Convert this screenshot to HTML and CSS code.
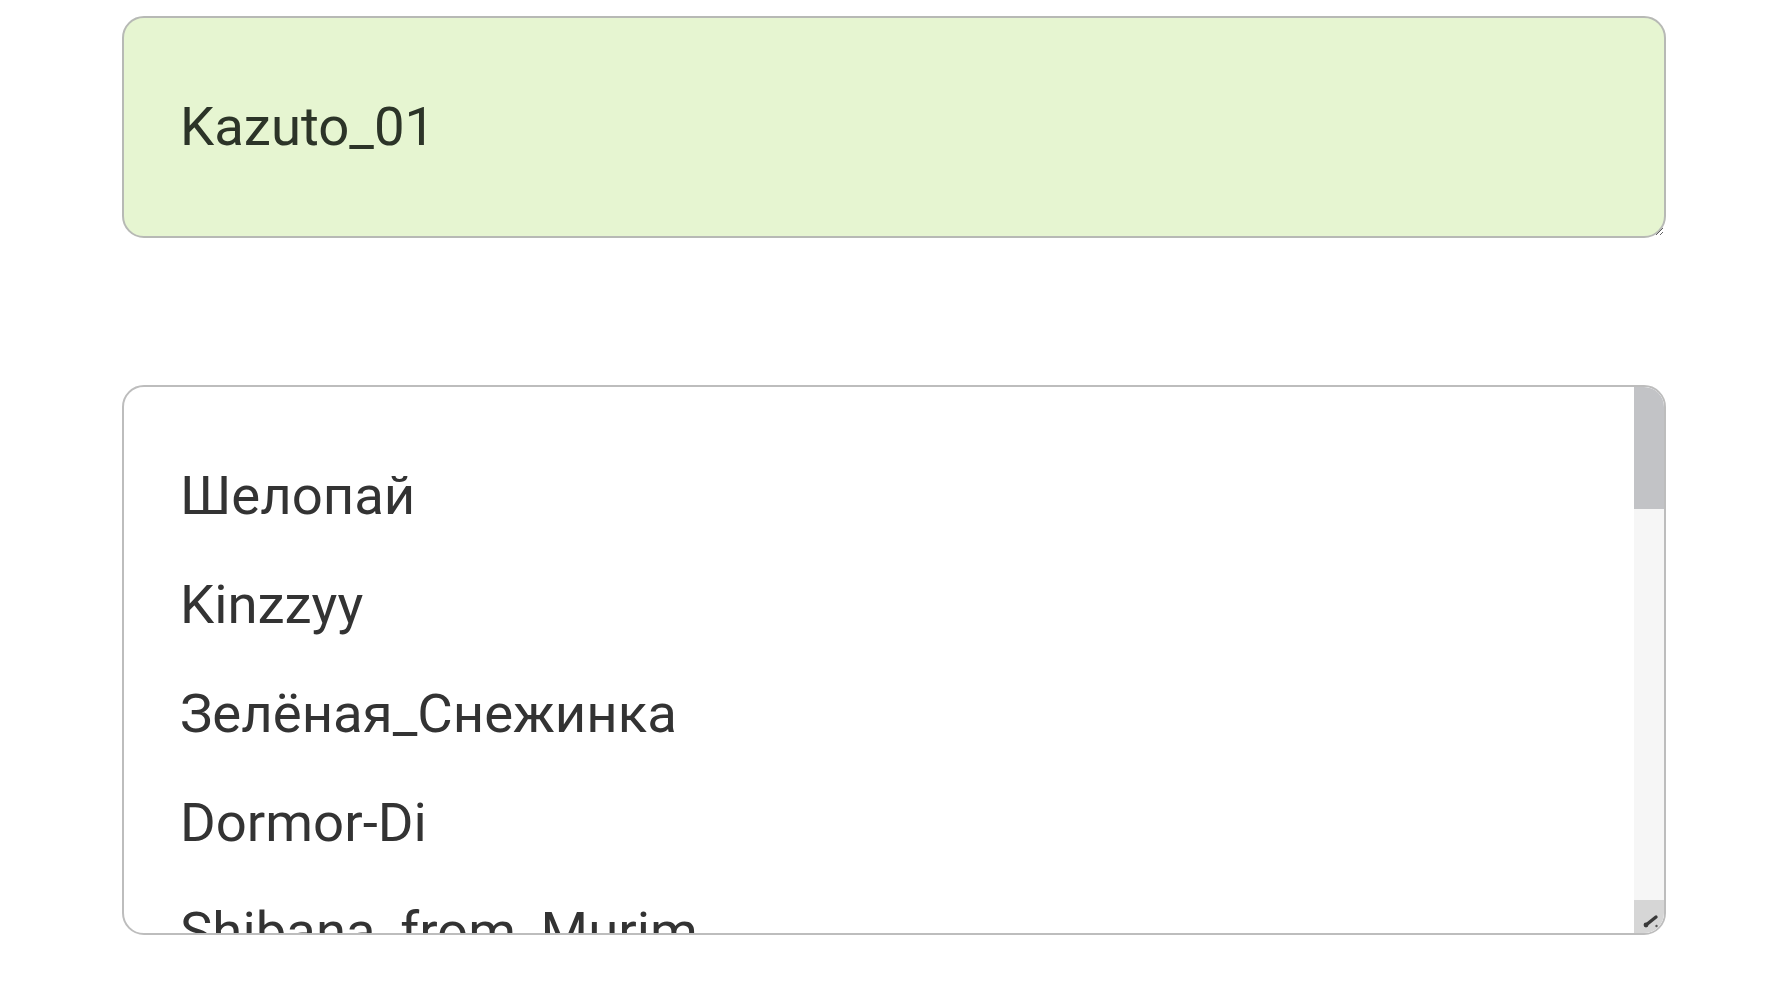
FILE: index.html
```html
<!DOCTYPE html>
<html lang="ru">
<head>
<meta charset="utf-8">
<title>Никнеймы</title>
<link rel="stylesheet" href="styles.css">
</head>
<body>
<main class="page">
  <div class="field field--current">Kazuto_01</div>
  <div class="field field--list">
    <div class="name">Шелопай</div>
    <div class="name">Kinzzyy</div>
    <div class="name">Зелёная_Снежинка</div>
    <div class="name">Dormor-Di</div>
    <div class="name">Shibana_from_Murim</div>
    <div class="scrollbar" aria-hidden="true">
      <div class="scrollbar__thumb"></div>
      <div class="scrollbar__corner">
        <svg class="grip" viewBox="0 0 30 33" width="30" height="33">
          <path d="M12 25 L22 17" stroke="#3a3a3a" stroke-width="3.4" stroke-linecap="round"/>
          <circle cx="12" cy="25" r="2.4" fill="#3a3a3a"/>
          <circle cx="22.5" cy="26" r="1.2" fill="#555"/>
          <circle cx="25" cy="28" r="1" fill="#777"/>
        </svg>
      </div>
    </div>
  </div>
</main>
</body>
</html>
```

FILE: styles.css
```css
html, body {
  margin: 0;
  padding: 0;
  background: #ffffff;
}

.page {
  display: flex;
  flex-direction: column;
  gap: 147px;
  padding: 16px 122px 0 122px;
  width: 1544px;
  font-family: Roboto, "Noto Sans", "Liberation Sans", sans-serif;
  font-size: 54.5px;
  line-height: 109px;
}

.field {
  box-sizing: border-box;
  width: 1544px;
  border: 2px solid #b7b9b5;
  border-radius: 22px;
  padding: 54px 54px 54px 56px;
}

.field--current {
  height: 222px;
  overflow: hidden;
  resize: vertical;
  background: #e6f5d1;
  color: #2c3428;
}

.field--list {
  position: relative;
  height: 550px;
  overflow: hidden;
  background: #ffffff;
  color: #333333;
  border-color: #bdbdbd;
}

.name {
  white-space: nowrap;
}

/* scroll track drawn over the right edge of the list */
.scrollbar {
  position: absolute;
  top: 0;
  right: 0;
  bottom: 0;
  width: 30px;
  display: flex;
  flex-direction: column;
  background: #f6f6f6;
}

.scrollbar__thumb {
  height: 122px;
  background: #c2c3c6;
}

.scrollbar__corner {
  margin-top: auto;
  height: 33px;
  background: #d6d6d6;
}

.grip {
  display: block;
}
```
